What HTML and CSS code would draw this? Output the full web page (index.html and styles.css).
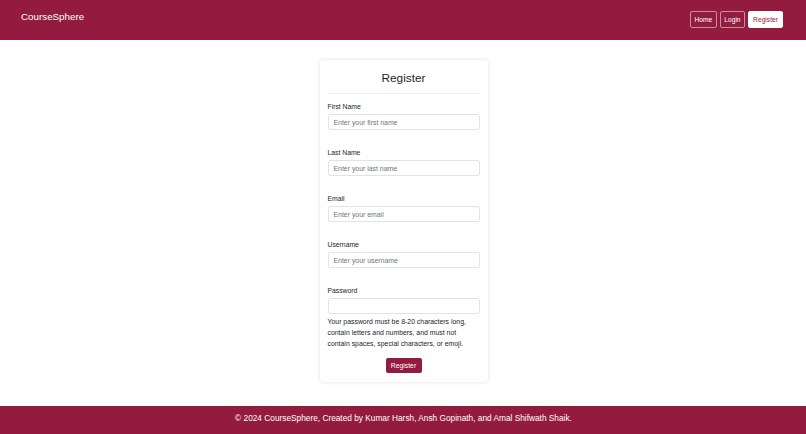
FILE: index.html
```html
<!DOCTYPE html>
<html>
<head>
<meta charset="utf-8">
<link rel="stylesheet" href="styles.css">
</head>
<body>
<header class="topbar">
  <div class="brand">CourseSphere</div>
  <nav class="nav">
    <a class="nav-btn">Home</a>
    <a class="nav-btn">Login</a>
    <a class="nav-btn active">Register</a>
  </nav>
</header>
<main class="main">
  <div class="card">
    <h1 class="title">Register</h1>
    <div class="group">
      <label class="label">First Name</label>
      <div class="input">Enter your first name</div>
    </div>
    <div class="group">
      <label class="label">Last Name</label>
      <div class="input">Enter your last name</div>
    </div>
    <div class="group">
      <label class="label">Email</label>
      <div class="input">Enter your email</div>
    </div>
    <div class="group">
      <label class="label">Username</label>
      <div class="input">Enter your username</div>
    </div>
    <div class="group last">
      <label class="label">Password</label>
      <div class="input"></div>
      <p class="help">Your password must be 8-20 characters long, contain letters and numbers, and must not contain spaces, special characters, or emoji.</p>
    </div>
    <div class="actions"><button class="submit">Register</button></div>
  </div>
</main>
<footer class="footer">© 2024 CourseSphere, Created by Kumar Harsh, Ansh Gopinath, and Amal Shifwath Shaik.</footer>
</body>
</html>
```
FILE: styles.css
```css
* { box-sizing: border-box; }
html, body { margin: 0; padding: 0; }
body {
  width: 806px;
  height: 434px;
  font-family: "Liberation Sans", Arial, sans-serif;
  color: #212529;
  background: #fff;
  display: flex;
  flex-direction: column;
}
.topbar {
  height: 40px;
  flex: none;
  background: #921b3f;
  display: flex;
  align-items: center;
  justify-content: space-between;
  padding: 0 23px 0 21px;
}
.brand {
  color: #fff;
  font-size: 9.8px;
  margin-top: -7px;
}
.nav { display: flex; gap: 3px; margin-top: -1px; }
.nav-btn {
  font-size: 6.7px;
  color: #fff;
  border: 1px solid rgba(255,255,255,0.5);
  border-radius: 2px;
  height: 17px;
  padding: 0 3.5px;
  display: flex;
  align-items: center;
}
.nav-btn.active {
  background: #fff;
  color: #921b3f;
  border-color: #fff;
  padding: 0 4px;
}
.main {
  flex: 1;
  display: flex;
  justify-content: center;
  align-items: flex-start;
  padding-top: 20px;
  padding-left: 1px;
}
.card {
  width: 168px;
  background: #fff;
  border-radius: 3px;
  box-shadow: 0 0 4px rgba(0,0,0,0.12);
  padding: 0 8px 9px;
}
.title {
  font-size: 11.8px;
  font-weight: 400;
  text-align: center;
  margin: 0;
  padding-top: 11px;
  padding-bottom: 8px;
  border-bottom: 1px solid #ececec;
  line-height: 14px;
}
.group { margin-top: 8px; }
.group + .group { margin-top: 18px; }
.label {
  display: block;
  font-size: 6.8px;
  line-height: 9px;
  margin-bottom: 3px;
}
.input {
  height: 16px;
  border: 1px solid #e3e3e3;
  border-radius: 2px;
  font-size: 6.9px;
  color: #6c757d;
  padding: 0 5px;
  display: flex;
  align-items: center;
}
.help {
  font-size: 6.9px;
  line-height: 11px;
  margin: 2px 0 0;
}
.actions { display: flex; justify-content: center; margin-top: 9px; }
.submit {
  background: #921b3f;
  color: #fff;
  border: none;
  border-radius: 2px;
  font-family: inherit;
  font-size: 6.8px;
  height: 15px;
  width: 36px;
  padding: 0;
}
.footer {
  height: 28px;
  flex: none;
  background: #921b3f;
  color: #fff;
  font-size: 8.3px;
  display: flex;
  align-items: center;
  justify-content: center;
  padding-bottom: 5px;
  padding-left: 1px;
}
```
